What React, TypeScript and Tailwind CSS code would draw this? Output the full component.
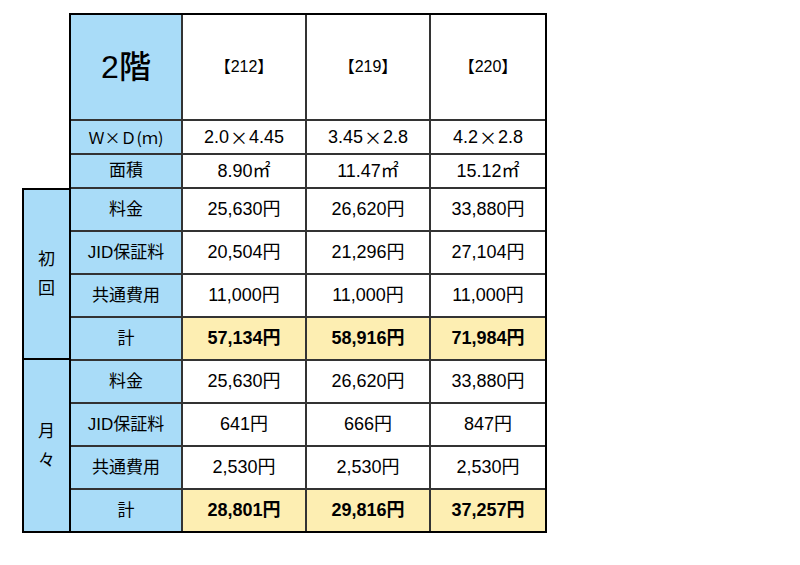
import React from "react";

const font = { fontFamily: '"Liberation Sans", "Noto Sans CJK JP", sans-serif' };
const cjk = { fontFamily: '"Noto Sans CJK JP", sans-serif' };

type Row = { label: React.ReactNode; vals: React.ReactNode[]; total?: boolean };

const X = () => (
  <span style={cjk} className="mx-[1px]">
    ×
  </span>
);

const top: Row[] = [
  {
    label: (
      <span style={cjk} className="text-[16px]">
        Ｗ×Ｄ(ｍ)
      </span>
    ),
    vals: [
      <>2.0<X />4.45</>,
      <>3.45<X />2.8</>,
      <>4.2<X />2.8</>,
    ],
  },
  { label: "面積", vals: ["8.90㎡", "11.47㎡", "15.12㎡"] },
];

const initial: Row[] = [
  { label: "料金", vals: ["25,630円", "26,620円", "33,880円"] },
  { label: "JID保証料", vals: ["20,504円", "21,296円", "27,104円"] },
  { label: "共通費用", vals: ["11,000円", "11,000円", "11,000円"] },
  { label: "計", vals: ["57,134円", "58,916円", "71,984円"], total: true },
];

const monthly: Row[] = [
  { label: "料金", vals: ["25,630円", "26,620円", "33,880円"] },
  { label: "JID保証料", vals: ["641円", "666円", "847円"] },
  { label: "共通費用", vals: ["2,530円", "2,530円", "2,530円"] },
  { label: "計", vals: ["28,801円", "29,816円", "37,257円"], total: true },
];

function Cells({ row }: { row: Row }) {
  return (
    <>
      <div className="bg-[#a9dcf8] flex items-center justify-center text-[17px] text-black">
        {row.label}
      </div>
      {row.vals.map((v, i) => (
        <div
          key={i}
          className={
            row.total
              ? "bg-[#fdeeb2] flex items-center justify-center text-[18px] font-bold text-black"
              : "bg-white flex items-center justify-center text-[18px] text-black"
          }
        >
          {v}
        </div>
      ))}
    </>
  );
}

export default function App() {
  return (
    <div className="w-[800px] h-[565px] bg-white" style={font}>
      <div className="flex items-end pl-[22px] pt-[13px]">
        <div className="flex flex-col w-[47px] h-[345px] border-2 border-r-0 border-black">
          <div className="h-[170px] bg-[#a9dcf8] border-b-2 border-black flex flex-col items-center justify-center text-[17px] leading-[29px] text-black">
            <span>初</span>
            <span>回</span>
          </div>
          <div className="flex-1 bg-[#a9dcf8] flex flex-col items-center justify-center text-[17px] leading-[29px] text-black">
            <span>月</span>
            <span>々</span>
          </div>
        </div>
        <div className="border-2 border-black bg-[#333]">
          <div className="grid grid-cols-[110px_122px_122px_114px] grid-rows-[104px_32px_32px_repeat(8,41px)] gap-[2px]">
            <div className="bg-[#a9dcf8] flex items-center justify-center text-[32px] font-medium text-black">
              2階
            </div>
            {["【212】", "【219】", "【220】"].map((t) => (
              <div
                key={t}
                className="bg-white flex items-center justify-center text-[16px] text-black"
              >
                {t}
              </div>
            ))}
            {top.map((r, i) => (
              <Cells key={"t" + i} row={r} />
            ))}
            {initial.map((r, i) => (
              <Cells key={"i" + i} row={r} />
            ))}
            {monthly.map((r, i) => (
              <Cells key={"m" + i} row={r} />
            ))}
          </div>
        </div>
      </div>
    </div>
  );
}
